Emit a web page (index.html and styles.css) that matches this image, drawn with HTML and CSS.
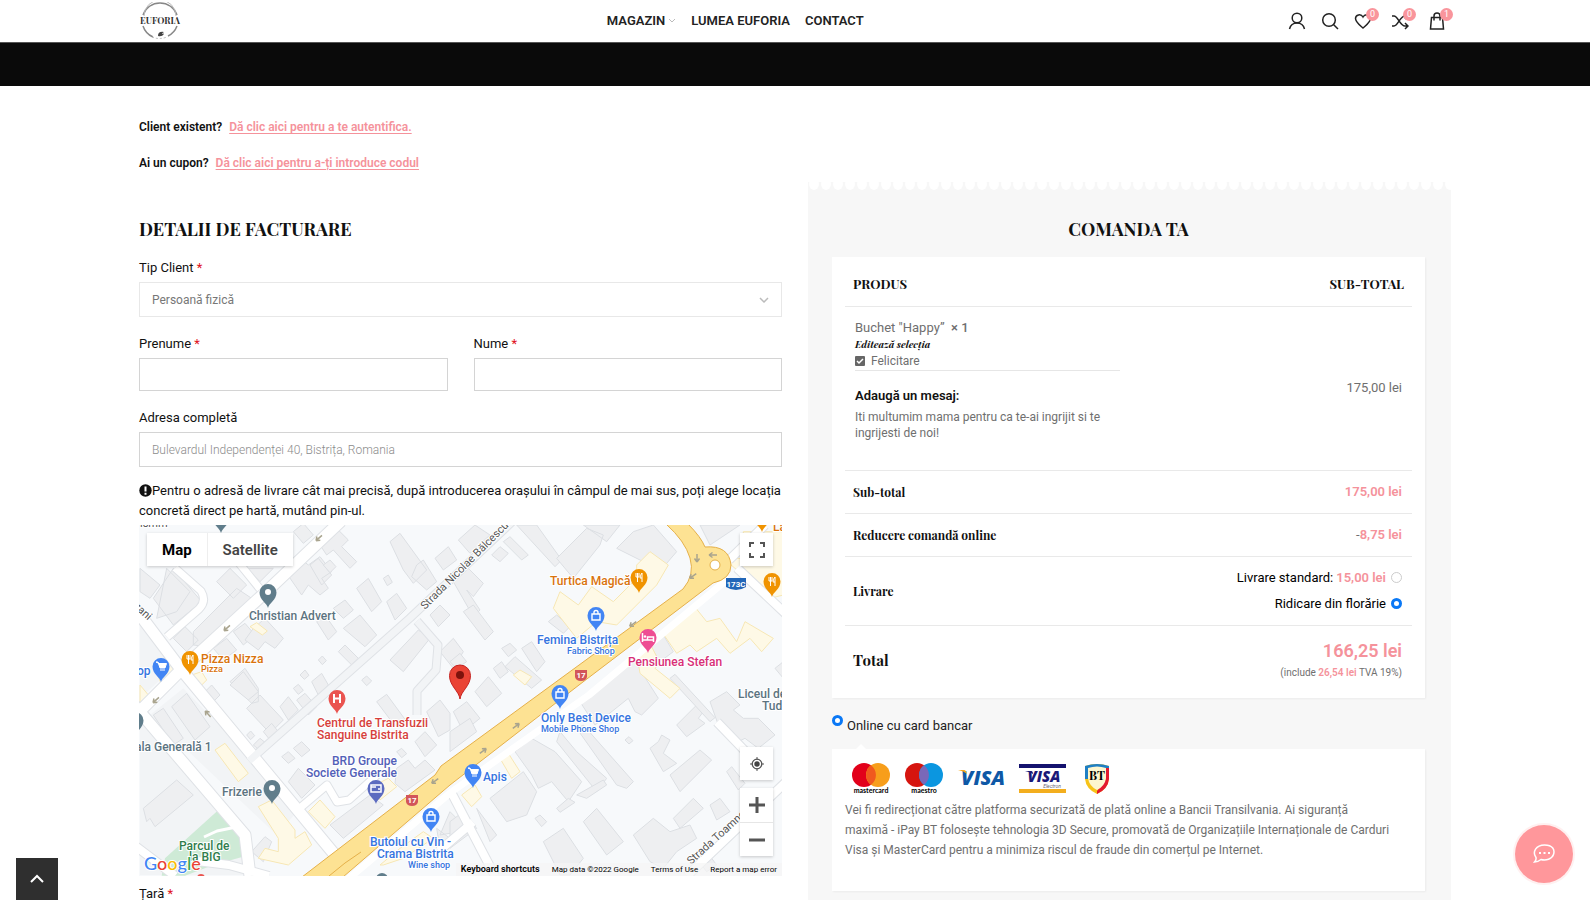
FILE: index.html
```html
<!DOCTYPE html>
<html lang="ro">
<head>
<meta charset="utf-8">
<title>Euforia</title>
<link rel="stylesheet" href="styles.css">
</head>
<body>
<header class="header">
  <div class="container header-row">
    <a class="logo" href="#" aria-label="Euforia">
      <svg width="42" height="38" viewBox="0 0 42 38">
        <g fill="none" stroke="#888">
          <path d="M4 13A18 18 0 0 1 38 13" stroke-width="1.500"/>
          <path d="M5 14A16 16 0 0 1 37 14" stroke="#bbb"/>
          <path d="M4 24A18 18 0 0 0 14 35M38 24A18 18 0 0 1 29 34" stroke-width="1.500"/>
          <path d="M13 35Q20 38 28 35" stroke="#bbb" stroke-dasharray="2 2"/>
        </g>
        <path d="M19 34q0-5 6-4q-2 1-2 2q2-1 2 0q-2 3-6 2z" fill="#444"/>
        <text class="logo-text" x="21" y="22" text-anchor="middle">EUFORIA</text>
      </svg>
    </a>
    <nav class="nav">
      <a href="#">MAGAZIN<svg class="nav-caret" width="8" height="6" viewBox="0 0 8 6"><path d="M1 1l3 3 3-3" fill="none" stroke="#bbb"/></svg></a>
      <a href="#">LUMEA EUFORIA</a>
      <a href="#">CONTACT</a>
    </nav>
    <div class="tools">
      <a class="tool" href="#" aria-label="Cont"><svg width="18" height="18" viewBox="0 0 18 18"><circle cx="9" cy="6" r="4.800"/><path d="M1.500 17c1-4 4-6 7.500-6s6.500 2 7.500 6"/></svg></a>
      <a class="tool" href="#" aria-label="Caută"><svg width="18" height="18" viewBox="0 0 18 18"><circle cx="8" cy="8" r="6.300"/><path d="M12.500 12.500l4.500 4.500"/></svg></a>
      <a class="tool" href="#" aria-label="Favorite"><svg width="18" height="18" viewBox="0 0 18 18"><path d="M9 16C5 12.500 1.500 10 1.500 6.500C1.500 2.500 7 1.500 9 5C11 1.500 16.500 2.500 16.500 6.500C16.500 10 13 12.500 9 16z"/></svg><span class="badge">0</span></a>
      <a class="tool tool-wide" href="#" aria-label="Compară"><svg width="18" height="18" viewBox="0 0 18 18"><path d="M1 4h2c4 0 6 10 11 10h2.500M1 14h2c4 0 6-10 11-10h2.500M14 11l3 3-3 3M14 1l3 3-3 3"/></svg><span class="badge">0</span></a>
      <a class="tool tool-wide" href="#" aria-label="Coș"><svg width="18" height="18" viewBox="0 0 18 18"><path d="M3.500 5.500h11l1 11.500h-13zM6 8.500V4a3 3 0 0 1 6 0v4.500"/></svg><span class="badge">1</span></a>
    </div>
  </div>
</header>
<div class="title-bar"></div>

<main class="container">
  <div class="notices">
    <p>Client existent? <a href="#">Dă clic aici pentru a te autentifica.</a></p>
    <p>Ai un cupon? <a href="#">Dă clic aici pentru a-ți introduce codul</a></p>
  </div>

  <form class="checkout">
    <section class="billing">
      <h2>DETALII DE FACTURARE</h2>
      <div class="field">
        <label for="tip">Tip Client <span class="req">*</span></label>
        <select id="tip" class="control select"><option>Persoană fizică</option></select>
      </div>
      <div class="field-pair">
        <div class="field">
          <label for="prenume">Prenume <span class="req">*</span></label>
          <input id="prenume" class="control control-short" type="text">
        </div>
        <div class="field">
          <label for="nume">Nume <span class="req">*</span></label>
          <input id="nume" class="control control-short" type="text">
        </div>
      </div>
      <div class="field field-address">
        <label for="adresa">Adresa completă</label>
        <input id="adresa" class="control" type="text" placeholder="Bulevardul Independenței 40, Bistrița, Romania">
      </div>
      <p class="hint"><svg class="hint-icon" width="13" height="13" viewBox="0 0 13 13"><circle cx="6.500" cy="6.500" r="6.200" fill="#111"/><path d="M6.500 2.500v5M6.500 8.800v2" stroke="#fff" stroke-width="2"/></svg>Pentru o adresă de livrare cât mai precisă, după introducerea orașului în câmpul de mai sus, poți alege locația concretă direct pe hartă, mutând pin-ul.</p>

      <div class="map">
        <svg class="map-canvas" viewBox="0 0 643 351" preserveAspectRatio="xMidYMid slice">
          <defs>
            <path id="pin" d="M0 0C-1-5-8.500-8-8.500-15.500A8.500 8.500 0 0 1 8.500-15.500C8.500-8 1-5 0 0Z"/>
            <path id="fork" d="M-3-20v4M-1.500-20v4M0-20v4M-3-16h3M-1.500-16v5M3-11v-9q-2 2-2 5h2" fill="none" stroke="#fff"/>
            <path id="bag" d="M-4-17h8v6h-8zM-2-17v-1.500a2 2 0 0 1 4 0V-17" fill="none" stroke="#fff" stroke-width="1.400"/>
            <path id="cart" d="M-5-20h2l2 6h5l1.500-4.500h-7.500zM-1-12h5" fill="#fff" stroke="#fff"/>
            <path id="arrow" d="M-4 0H4M-4 0l3.500-2.500M-4 0l3.500 2.500" fill="none" stroke="#a9a48e" stroke-width="1.500"/>
            <path id="shield" d="M-6-5h12v7q-1 4-6 4t-6-4z" fill="#d2555a"/>
          </defs>
          <rect width="643" height="351" fill="#f7f9fb"/>

          <g transform="translate(-9 -10) scale(.33333)">
            <path fill="#f2f4f6" d="M30 610L350 960V1080H30zM30 330L150 440L30 550zM160 520L510 880L440 960L60 600z"/>
            <path fill="#ceead6" d="M262 888L345 965L350 1022L250 1050L165 1082H95L105 1030z"/>
            <g fill="#eeeff1" stroke="#dcdfe3" stroke-width="3">
              <path d="M70 250L130 160L215 260L130 330zM30 160L90 210L60 250L30 230zM110 160L180 230L140 290L80 310z"/>
              <path d="M190 350L320 220L365 250L235 395L190 390zM130 370l35-35 40 40-35 35zM260 200l40-40 50 50-40 40zM350 160h80l-40 40zM250 400l40-30 30 35-40 30zM310 350l35-25 30 35-35 30z"/>
              <path d="M470 175l40-45 25 20 35-25 35 45-30 20 20 30-25 20-35-30-20 30zM570 90l50-50 35 35-20 20 45 45-20 20-50-55-20 15zM540 150l25-20 40 50-30 30zM490 50l30-25 30 35-30 25z"/>
              <path d="M370 340l35-30 55 60-25 30-30-20-20 25-40-30zM300 500l45-40 40 60 0 40-20 5zM350 580l40-40 70 75-40 40zM580 150l20-15 18 20-18 18zM610 280l35-25 25 30-30 25z"/>
              <path d="M680 220l35-30 40 70-30 30zM640 340l50-40 50 60-35 35zM780 80l30-25 80 110-40 40-30-40zM860 150l20-15 40 65-30 25-45-40zM915 130l40-35 25 40-40 30zM760 190l15-10 12 22-15 10z"/>
              <path d="M780 435L865 345L900 370L820 470zM770 260l30-25 30 45-35 35zM560 320l25-20 35 50-25 25zM930 410l40-40 30 40-30 50zM900 300l30-30 30 30-35 35z"/>
              <path d="M300 510l40-40 45 60-30 25zM450 575l25-30 30 40-30 30zM545 500l30-25 20 35-30 30zM500 555l25-20 35 40-25 25zM490 520l15-12 15 18-15 12zM565 435l12-12 12 14-12 12zM510 480l15-15 12 16-14 12zM625 410l20-20 40 40-20 20zM695 495l15-12 15 15-15 14z"/>
              <path d="M125 575l45-40 70 100-45 40zM70 600l30-20 60 90-30 20zM225 530l20-20 25 30-20 20zM400 650l25-25 20 25-25 25zM370 690l20-20 25 20-22 20zM350 660l12-12 12 14-12 12zM455 725l20-15 20 20-20 15zM490 700l25-20 25 25-25 20z"/>
              <path d="M475 800l30-40 50 50-40 40zM740 560l30-22 55 75-30 20zM855 680l30-30 35 40-35 35zM800 760l35-25 20 25 30-25 30 30-90 65-30-25zM890 590l40-35 30 40 0 50-35 20zM800 710l15-10 15 16-15 12z"/>
              <path d="M40 880L140 795L190 840L75 935L60 910L50 920zM365 1010l40-45 20 15-25 60zM600 930L720 840L760 870L640 970zM960 890l30 30v30l-60 10zM920 940l40 30-30 30z"/>
            </g>
            <g fill="#fef9e6" stroke="#f7e7b4" stroke-width="3">
              <path d="M255 705l30-20 70 90-30 25zM385 875l40-20 70 90 0 25 30-20 20 40-70 60-90-20 20-30 40 10 0-40zM535 890l35-35 45 50-30 35zM750 1050l60-50 70-50 30 20-90 60-60 20zM360 335l20-12 32 25-15 12zM75 460l60-35 18 30-60 50zM30 510l25 30-25 30zM185 480l30-10 15 25-15 15zM735 810l40-20 25 25-50 40z"/>
            </g>
          </g>

          <g transform="translate(311 -10) scale(.33333)">
            <g fill="#eeeff1" stroke="#dcdfe3" stroke-width="3">
              <path d="M25 75l50-45 45 30-60 55zM160 80l20-15 55 55-20 15zM125 120l25-25 25 20-25 25zM10 200l40-45 50 50-30 40-20-20 40 60-20 20zM200 30h60l75 105-20 20z"/>
              <path d="M320 130L410 40L460 60L450 90L370 190zM400 30h110l-40 50zM500 100l50-50 60-20 70 80-60 70-40-40zM750 30h120l-90 60zM40 290l30-20 60 80-25 25zM295 320l25-20 40 35-20 20zM155 400l25-15 20 20-25 20z"/>
              <path d="M215 400l30-20 40 60-25 30zM165 455l30-30 80 70-30 25zM130 460l25-20 20 30-25 20zM75 530l40-45 40 50-45 40zM10 590l40-30 40 50-50 40zM0 440l30-25 20 25-30 20z"/>
              <path d="M390 560l60-40 60-60 45-20 70 110-50 50-20-10-20-40-100 80zM600 390l40-30 30 50-40 30zM680 630l60-60 20 20-15 20 20 15-55 40zM780 560l50-30 40 40-20 15 30 25 45 0 50 50-50 40-40-30-20 10-60-50z"/>
              <path d="M660 490l15-12 120 130-15 12zM600 700l25-20 10-20 25 15-20 40 40 30-40 25zM660 780L750 705L785 735L690 830zM195 710l50-40 70 40 80 90-40 60-50-60-40 20-20-40zM330 650l50 60 90 80-30 40-120-150zM380 640l20-10 150 170-20 20-30-10z"/>
              <path d="M120 850l100-80 40 60-30 70-60 20zM320 880l35-30 20 12-45 30zM380 840l80-45 10 15-60 40zM400 920l40-40 80 100-50 40zM280 980l60-40 60 90-40 50H330zM550 960l60-50 50 40 60-20 20 40-60 40-40 50-40-20zM670 910l60-60 30 30-70 60zM780 870l30-20 30 40-40 25zM830 770l15-15 40 50-20 20zM975 460l25-20v50zM255 910l15-10 20 20-15 15zM525 675l12-10 12 12-12 10z"/>
              <path d="M0 920l40-30 40 50-80 60zM80 880l60 80-20 20zM740 1030l30-20 30 40-30 20zM0 650l60-40 20 40-80 60z"/>
            </g>
            <g fill="#fef9e6" stroke="#f7e7b4" stroke-width="3">
              <path d="M310 280L330 230L385 270L425 215L490 260L560 190L560 150L600 110L655 150L620 210L570 260L500 330L440 320L380 370zM635 350L730 270L770 320L810 310L860 380L885 320L970 370L935 410L900 370L840 415L800 370L740 410L720 390L680 415zM820 130L880 130V50H1000V240L960 250zM560 410l40-25 30 60-15 15 75 60-30 30-90-75zM150 730l25-15 35 55-25 20zM35 840l40-30 20 35-30 30zM190 480l20-15 35 20-20 25z"/>
            </g>
          </g>

          <g fill="none" stroke-linejoin="round">
            <g stroke="#dfe2e6">
              <path d="M-5 192L45 142L128 66L202-4M-5 82L41 143L196 330M-5 180L106 310L111 351" stroke-width="13"/>
              <path d="M110 236L271 93L376-6M278 96L299 120L297 145L278 166V190M161 283L188 260L198 277L210 275L238 250M36 43L62 66Q68 76 60 84L28 112M100 38L121 64" stroke-width="9"/>
              <path d="M311 265L356 351M300 326L334 297M590 35L626 0M598 43L648 90M578 197L606 226M548 351L648 256M-5 320L36 351M58 336L90 340L130 351" stroke-width="10"/>
            </g>
            <g stroke="#fff">
              <path d="M-5 192L45 142L128 66L202-4M-5 82L41 143L196 330M-5 180L106 310L111 351" stroke-width="11"/>
              <path d="M36 43L62 66Q68 76 60 84L28 112M100 38L121 64M161 283L188 260L198 277L210 275L238 250" stroke-width="7"/>
              <path d="M311 265L356 351M300 326L334 297M590 35L626 0M598 43L648 90M578 197L606 226M548 351L648 256M-5 320L36 351M58 336L90 340L130 351" stroke-width="8"/>
              <path d="M65 312L78 306L102 301" stroke-width="3"/>
              <path d="M208 355L311 268L450 170L590 53" stroke-width="7"/>
            </g>
            <path d="M110 236L271 93L376-6M278 96L299 120L297 145L278 166V190" stroke="#f2f4f6" stroke-width="7"/>
          </g>

          <path d="M163 352L296 250L302 241L544 64Q556 50 551 33Q546 16 527-1H549Q562 12 566 22Q590 20 592 40Q592 54 574 58L440 160L311 260L204 352Z" fill="#fde293" stroke="#e5b04a" stroke-width="1"/>
          <path d="M190 351L206 338L222 327" fill="none" stroke="#e5b04a"/>
          <circle cx="576" cy="40" r="5" fill="#fff" stroke="#e5b04a"/>

          <use href="#arrow" transform="translate(180 13) rotate(-42)"/>
          <use href="#arrow" transform="translate(88 103) rotate(-42)"/>
          <use href="#arrow" transform="translate(17 175) rotate(-42)"/>
          <use href="#arrow" transform="translate(69 189) rotate(48)"/>
          <use href="#arrow" transform="translate(296 256) rotate(-35)"/>
          <use href="#arrow" transform="translate(344 226) rotate(143)"/>
          <use href="#arrow" transform="translate(377 201) rotate(143)"/>
          <use href="#arrow" transform="translate(494 99) rotate(-35)"/>
          <use href="#arrow" transform="translate(554 51) rotate(-35)"/>
          <use href="#arrow" transform="translate(558 33) rotate(-90)"/>
          <use href="#arrow" transform="translate(574 30)"/>

          <use href="#shield" x="273" y="275"/>
          <use href="#shield" x="442" y="150"/>
          <path d="M587 53h20v9q-5 3-10 3t-10-3z" fill="#2266b8"/>
          <g class="road-no">
            <text x="273" y="278">17</text><text x="442" y="153">17</text><text x="597" y="62">173C</text>
          </g>

          <g fill="#607d8b"><use href="#pin" x="129" y="83"/><use href="#pin" x="133" y="279"/><use href="#pin" x="-4" y="211"/><use href="#pin" x="82" y="8"/></g>
          <g fill="#f09300"><use href="#pin" x="51" y="150"/><use href="#pin" x="500" y="68"/><use href="#pin" x="633" y="72"/><use href="#pin" x="623" y="7"/></g>
          <g fill="#4285f4"><use href="#pin" x="22" y="157"/><use href="#pin" x="292" y="307"/><use href="#pin" x="457" y="106"/><use href="#pin" x="421" y="184"/><use href="#pin" x="334" y="263"/></g>
          <use href="#pin" x="198" y="189" fill="#ea5450"/>
          <use href="#pin" x="237" y="279" fill="#5c6bc0"/>
          <use href="#pin" x="509" y="128" fill="#ee4d93"/>
          <g fill="#fff"><circle cx="129" cy="67" r="3"/><circle cx="133" cy="263" r="3"/></g>
          <path d="M195 169v9M201 169v9M195 173.500h6" fill="none" stroke="#fff" stroke-width="2"/>
          <path d="M232 260h10v7h-10zM232 262h5M239 264h2" fill="none" stroke="#fff" stroke-width="1.500"/>
          <path d="M503.500 108v9M503.500 115h11M514.500 117v-5h-6v3" fill="none" stroke="#fff" stroke-width="1.500"/>
          <circle cx="506" cy="111.500" r="1.200" fill="#fff"/>
          <use href="#fork" x="51" y="150"/><use href="#fork" x="500" y="68"/><use href="#fork" x="633" y="72"/>
          <use href="#bag" x="292" y="307"/><use href="#bag" x="457" y="106"/><use href="#bag" x="421" y="184"/>
          <use href="#cart" x="22" y="157"/><use href="#cart" x="334" y="263"/>
          <path d="M321 174C320 166 310.500 161 310.500 150.500A10.500 10.500 0 0 1 331.500 150.500C331.500 161 322 166 321 174Z" fill="#ea4335" stroke="#c5221f"/>
          <circle cx="321" cy="150" r="4" fill="#7d120c"/>
          <circle cx="62" cy="353" r="4" fill="#ea5450"/><circle cx="243" cy="354" r="6" fill="#607d8b"/>

          <g class="poi poi-slate">
            <text x="110" y="95">Christian Advert</text>
            <text x="83" y="271">Frizerie</text>
            <text x="-4" y="226">ala Generală 1</text>
            <text x="599" y="173">Liceul de</text>
            <text x="623" y="185">Tud</text>
          </g>
          <g class="poi poi-orange">
            <text x="62" y="138">Pizza Nizza</text>
            <text class="poi-sub" x="62" y="147">Pizza</text>
            <text x="411" y="60">Turtica Magică</text>
            <text x="634" y="6">La</text>
          </g>
          <g class="poi poi-red">
            <text x="178" y="202">Centrul de Transfuzii</text>
            <text x="178" y="214">Sanguine Bistrita</text>
          </g>
          <g class="poi poi-violet">
            <text x="193" y="240">BRD Groupe</text>
            <text x="167" y="252">Societe Generale</text>
          </g>
          <g class="poi poi-blue">
            <text x="-2" y="150">op</text>
            <text x="231" y="321">Butoiul cu Vin -</text>
            <text x="238" y="333">Crama Bistrita</text>
            <text class="poi-sub" x="269" y="343">Wine shop</text>
            <text x="398" y="119">Femina Bistrița</text>
            <text class="poi-sub" x="428" y="129">Fabric Shop</text>
            <text x="402" y="197">Only Best Device</text>
            <text class="poi-sub" x="402" y="207">Mobile Phone Shop</text>
            <text x="344" y="256">Apis</text>
          </g>
          <g class="poi poi-pink"><text x="489" y="141">Pensiunea Stefan</text></g>
          <g class="poi poi-green"><text x="40" y="325">Parcul de</text><text x="50" y="336">la BIG</text></g>
          <g class="street">
            <text transform="translate(286 85) rotate(-45)">Strada Nicolae Bălcescu</text>
            <text transform="translate(552 340) rotate(-42)">Strada Toamnei</text>
            <text transform="translate(-6 82) rotate(42)">zani</text>
            <text x="1" y="2">ismm</text>
          </g>
          <text class="google" x="5" y="345"><tspan fill="#4285f4">G</tspan><tspan fill="#ea4335">o</tspan><tspan fill="#fbbc05">o</tspan><tspan fill="#4285f4">g</tspan><tspan fill="#34a853">l</tspan><tspan fill="#ea4335">e</tspan></text>
        </svg>
        <div class="map-types"><button type="button" class="map-type map-type-on">Map</button><button type="button" class="map-type">Satellite</button></div>
        <button type="button" class="map-btn map-full" aria-label="Ecran complet"><svg width="16" height="16" viewBox="0 0 16 16"><path d="M1 5V1h4M11 1h4v4M15 11v4h-4M5 15H1v-4" fill="none" stroke="#555" stroke-width="2"/></svg></button>
        <div class="map-side">
          <button type="button" class="map-btn" aria-label="Locația mea"><svg width="14" height="14" viewBox="0 0 14 14"><circle cx="7" cy="7" r="4.800" fill="none" stroke="#555" stroke-width="1.300"/><circle cx="7" cy="7" r="2.700" fill="#444"/><path d="M7 0v3M7 11v3M0 7h3M11 7h3" stroke="#555"/></svg></button>
          <div class="map-zoom">
            <button type="button" class="map-btn" aria-label="Mărește"><svg width="16" height="16" viewBox="0 0 16 16"><path d="M8 0v16M0 8h16" stroke="#555" stroke-width="3"/></svg></button>
            <button type="button" class="map-btn" aria-label="Micșorează"><svg width="16" height="16" viewBox="0 0 16 16"><path d="M0 8h16" stroke="#555" stroke-width="3"/></svg></button>
          </div>
        </div>
        <div class="map-legal"><button type="button">Keyboard shortcuts</button><span>Map data ©2022 Google</span><a href="#">Terms of Use</a><a href="#">Report a map error</a></div>
      </div>
      <div class="field field-country"><span class="label">Țară <span class="req">*</span></span></div>
    </section>

    <section class="order">
      <svg class="scallop" width="100%" height="8"><defs><pattern id="waves" width="12" height="8" patternUnits="userSpaceOnUse"><rect width="12" height="8" fill="#f7f7f7"/><ellipse cx="6" cy="2" rx="5" ry="6" fill="#fff"/></pattern></defs><rect width="100%" height="8" fill="url(#waves)"/></svg>
      <h2>COMANDA TA</h2>
      <div class="card">
        <table class="summary">
          <thead><tr><th>PRODUS</th><th class="amount">SUB-TOTAL</th></tr></thead>
          <tbody>
            <tr class="product">
              <td>
                <div class="product-body">
                  <div class="product-name">Buchet "Happy”&nbsp; <strong>× 1</strong></div>
                  <a class="edit" href="#">Editează selecția</a>
                  <div class="option"><svg width="10" height="10" viewBox="0 0 10 10"><rect width="10" height="10" rx="1" fill="#666"/><path d="M2 5l2 2 4-4" fill="none" stroke="#fff" stroke-width="1.500"/></svg>Felicitare</div>
                  <div class="message-title">Adaugă un mesaj:</div>
                  <p class="message">Iti multumim mama pentru ca te-ai ingrijit si te ingrijesti de noi!</p>
                </div>
              </td>
              <td class="amount">175,00 lei</td>
            </tr>
            <tr><th>Sub-total</th><td class="amount"><b>175,00 lei</b></td></tr>
            <tr><th>Reducere comandă online</th><td class="amount">-<b>8,75 lei</b></td></tr>
            <tr class="shipping"><th>Livrare</th><td class="amount">
              <label>Livrare standard: <b>15,00 lei</b><input class="radio" type="radio" name="livrare"></label>
              <label>Ridicare din florărie<input class="radio" type="radio" name="livrare" checked></label>
            </td></tr>
            <tr class="total"><th>Total</th><td class="amount"><b class="grand">166,25 lei</b><small>(include <b>26,54 lei</b> TVA 19%)</small></td></tr>
          </tbody>
        </table>
      </div>
      <div class="pay">
        <input class="radio" id="card" type="radio" name="plata" checked><label for="card">Online cu card bancar</label>
      </div>
      <div class="card pay-box">
        <div class="brands">
          <svg width="38" height="32" viewBox="0 0 38 32" role="img" aria-label="mastercard"><circle cx="12" cy="12" r="12" fill="#e2001a"/><circle cx="26" cy="12" r="12" fill="#f79e1b"/><path d="M19 2.300a12 12 0 0 1 0 19.400a12 12 0 0 1 0-19.400z" fill="#f0591e"/><text class="brand-name" x="19" y="30">mastercard</text></svg>
          <svg width="38" height="32" viewBox="0 0 38 32" role="img" aria-label="maestro"><circle cx="12" cy="12" r="12" fill="#d6150f"/><circle cx="26" cy="12" r="12" fill="#0b96e0"/><path d="M19 2.300a12 12 0 0 1 0 19.400a12 12 0 0 1 0-19.400z" fill="#7a68b8"/><text class="brand-name" x="19" y="30">maestro</text></svg>
          <svg width="48" height="32" viewBox="0 0 48 32" role="img" aria-label="VISA"><text class="visa" x="25" y="22" fill="#0e58a6">VISA</text><path d="M0 7h6q2 0 3 4q-3-3-9-4z" fill="#f5a81c"/></svg>
          <svg class="electron-card" width="47" height="32" viewBox="0 0 47 32" role="img" aria-label="VISA Electron"><path d="M0 1h47v4H0z" fill="#14126e"/><path d="M0 26h47v4H0z" fill="#f3ae1e"/><text class="visa visa-small" x="25" y="19" fill="#1a1878">VISA</text><path d="M6 8h6q2 0 2 3q-3-2-8-3z" fill="#1a1878"/><text class="electron" x="33" y="25">Electron</text></svg>
          <svg class="bt" width="26" height="32" viewBox="0 0 26 32" role="img" aria-label="BT"><path d="M13 1Q19 1 25 3V16Q24 26 13 31Q2 26 1 16V3Q7 1 13 1z" fill="#f7c318"/><path d="M1 16V3Q7 1 13 1Q19 1 25 3V5H4V16z" fill="#1f7fc4"/><path d="M25 5V16Q24 26 13 31V28L22 16V5z" fill="#e3192e"/><path d="M4 5Q13 2 22 5V15Q21 23 13 27Q5 23 4 15z" fill="#fdf6cf"/><text class="bt-text" x="13" y="17">BT</text></svg>
        </div>
        <p class="pay-text">Vei fi redirecționat către platforma securizată de plată online a Bancii Transilvania. Ai siguranță<br>maximă - iPay BT folosește tehnologia 3D Secure, promovată de Organizațiile Internaționale de Carduri<br>Visa și MasterCard pentru a minimiza riscul de fraude din comerțul pe Internet.</p>
      </div>
    </section>
  </form>
</main>

<button type="button" class="to-top" aria-label="Sus"><svg width="14" height="9" viewBox="0 0 14 9"><path d="M1 8l6-6 6 6" fill="none" stroke="#fff" stroke-width="2"/></svg></button>
<button type="button" class="chat" aria-label="Chat"><svg width="22" height="20" viewBox="0 0 22 20"><path d="M3 13.500C-1 8 3 1 11.500 1S22 6 20.500 10.500S13 17 8 15.500Q5 18 1.500 18Q3.500 16 3 13.500z" fill="none" stroke="#fff" stroke-width="1.500"/><path d="M6 9h2M10.500 9h2M15 9h2" stroke="#fff" stroke-width="1.800"/></svg></button>
</body>
</html>
```

FILE: styles.css
```css
:root {
  --pink: #f5929b;
  --ink: #111;
  --grey: #6f6f6f;
  --serif: "Playfair Display", "Liberation Serif", serif;
  --sans: Roboto, "Liberation Sans", sans-serif;
}
* { box-sizing: border-box; }
html { scrollbar-width: none; }
body { margin: 0; background: #fff; color: var(--ink); font: 13px/20px var(--sans); }
h2, p { margin: 0; }
button, input, select { font: inherit; }
a { color: inherit; text-decoration: none; }
.container { max-width: 1360px; margin: 0 auto; padding: 0 24px; }

.header-row { display: grid; grid-template-columns: 47fr auto 59fr; align-items: center; height: 42px; }
.logo { display: flex; }
.logo-text { font: bold 9px var(--serif); fill: #333; }
.nav { display: flex; gap: 15px; font-weight: 600; color: #222; }
.nav-caret { margin-left: 3px; vertical-align: 1px; }
.tools { display: flex; justify-content: flex-end; gap: 15px; padding-right: 5px; }
.tool { position: relative; display: flex; }
.tool-wide { margin-left: 4px; }
.tool svg { fill: none; stroke: #222; stroke-width: 1.5; }
.badge { position: absolute; left: 12px; top: -4px; width: 13px; height: 13px; border-radius: 50%; background: #f9959c; color: #fff; font-size: 9px; line-height: 13px; text-align: center; }
.title-bar { height: 44px; background: #0a0a0a; border-top: 1px solid #555; }

.notices { display: grid; gap: 16px; padding: 31px 0 9px; font-size: 12px; font-weight: 600; }
.notices a { margin-left: 4px; color: var(--pink); text-decoration: underline; text-underline-offset: 2px; }

.checkout { display: grid; grid-template-columns: 1fr 1fr; gap: 26px; }
h2 { font: bold 18px/24px var(--serif); }
.billing { padding-top: 35px; }
.billing h2 { margin-bottom: 17px; }
.field { display: grid; gap: 4px; margin-bottom: 17px; }
.field-pair { display: grid; grid-template-columns: 1fr 1fr; gap: 26px; }
.req { color: #e01020; }
.control { width: 100%; height: 35px; padding: 0 12px; border: 1px solid #d4d4d4; border-radius: 0; background-color: #fff; color: #777; font-size: 12px; }
.control::placeholder { color: #8c8c8c; opacity: 1; font-weight: 300; }
.control-short { height: 33px; }
.select { appearance: none; border-color: #e8e8e8; background: #fff url("data:image/svg+xml,%3Csvg xmlns='http://www.w3.org/2000/svg' width='10' height='6'%3E%3Cpath d='M1 1l4 4 4-4' fill='none' stroke='%23bbb' stroke-width='1.5'/%3E%3C/svg%3E") no-repeat right 12px center; }
.field-address { margin-bottom: 14px; }
.hint { margin-bottom: 4px; }
.hint-icon { vertical-align: -2px; }
.field-country { margin-top: 8px; margin-bottom: 24px; }

.map { position: relative; height: 351px; overflow: hidden; }
.map-canvas { display: block; width: 100%; height: 100%; }
.map-types { position: absolute; left: 8px; top: 8px; display: flex; background: #fff; box-shadow: 0 1px 3px #0003; }
.map-type { height: 33px; padding: 0 15px; border: 0; background: none; font-size: 15px; font-weight: 600; color: #444; }
.map-type-on { font-weight: 700; color: #000; border-right: 1px solid #eee; }
.map-btn { display: grid; place-items: center; width: 33px; height: 33px; padding: 0; border: 0; background: #fff; box-shadow: 0 1px 3px #0003; }
.map-full { position: absolute; right: 9px; top: 8px; }
.map-side { position: absolute; right: 9px; bottom: 20px; display: grid; gap: 8px; }
.map-zoom { box-shadow: 0 1px 3px #0003; background: #fff; }
.map-zoom .map-btn { height: 34px; box-shadow: none; }
.map-zoom .map-btn + .map-btn { border-top: 1px solid #e6e6e6; }
.map-legal { position: absolute; right: 0; bottom: 0; display: flex; gap: 12px; padding: 0 5px; background: #f5f5f5b3; font-size: 8px; line-height: 13px; color: #000; }
.map-legal button { padding: 0; border: 0; background: none; font-size: 9px; font-weight: 600; }
.poi text { font: 500 12px var(--sans); stroke: #fff; stroke-width: 2px; paint-order: stroke; }
.poi text.poi-sub { font-size: 9px; }
.poi-slate { fill: #5b7380; }
.poi-orange { fill: #d9730d; }
.poi-red { fill: #d63f3c; }
.poi-violet { fill: #5260b8; }
.poi-blue { fill: #3574e0; }
.poi-pink { fill: #d82f78; }
.poi-green { fill: #2f7d4c; }
.street text { font: 11px var(--sans); fill: #555; stroke: #fff; stroke-width: 2px; paint-order: stroke; }
.road-no text { font: bold 8px var(--sans); fill: #fff; text-anchor: middle; }
.google { font: 500 18px Lato, sans-serif; stroke: #fff; stroke-width: 2px; paint-order: stroke; }

.order { padding: 0 26px 24px 24px; background: #f7f7f7; }
.scallop { display: block; width: calc(100% + 50px); margin-left: -24px; }
.order h2 { margin: 27px 0 16px; text-align: center; }
.card { background: #fff; box-shadow: 1px 1px 2px #0000000d; padding: 0 13px; }
.summary { width: 100%; border-collapse: collapse; color: var(--grey); }
.summary tr + tr, .summary tbody tr:first-child { border-top: 1px solid #e9e9e9; }
.summary th, .summary td { height: 43px; padding: 0 8px; text-align: left; }
.summary th { font: bold 12px/20px var(--serif); color: var(--ink); }
.summary thead th { height: 49px; padding-top: 5px; font-size: 13px; }
.summary .amount { text-align: right; padding-right: 10px; }
.summary thead .amount { padding-right: 8px; }
.summary b { font-weight: 600; color: var(--pink); }
.summary .product td { height: 164px; padding-left: 10px; }
.product-body { width: 265px; padding-bottom: 16px; }
.product-name { line-height: 16px; }
.product-name strong { font-weight: 500; }
.edit { display: block; font: italic bold 10px/16px var(--serif); color: var(--ink); }
.option { display: flex; align-items: center; gap: 6px; height: 19px; border-bottom: 1px solid #e6e6e6; font-size: 12px; }
.message-title { margin-top: 15px; font-weight: 600; color: var(--ink); }
.message { margin-top: 3px; font-size: 12px; line-height: 16px; }
.summary .shipping td { height: 69px; }
.shipping label { display: flex; justify-content: flex-end; align-items: center; gap: 5px; color: #000; line-height: 26px; }
.shipping label b { margin-left: -2px; }
.radio { appearance: none; width: 11px; height: 11px; margin: 0; border: 1px solid #ccc; border-radius: 50%; background: #fff; }
.radio:checked { border: 3px solid #0a78f5; }
.summary .total th { padding-bottom: 4px; font-size: 15px; }
.summary .total td { height: 73px; padding-bottom: 2px; }
.grand { display: block; font-size: 18px; line-height: 24px; }
small { display: block; font-size: 10px; }
.pay { display: flex; gap: 4px; padding: 16px 0 13px; color: #222; }
.pay .radio { margin-top: 1px; }
.pay label { padding-top: 2px; }
.pay-box { position: relative; padding-top: 14px; padding-bottom: 31px; color: var(--grey); }
.pay-box::before { content: ""; position: absolute; left: 24px; top: -5px; border: 5px solid transparent; border-top: 0; border-bottom-color: #fff; }
.brands { display: flex; align-items: center; gap: 15px; height: 32px; margin-bottom: 5px; padding-left: 7px; }
.electron-card { margin-left: -2px; }
.bt { margin-left: 3px; }
.brand-name { font: bold 7px Lato, sans-serif; text-anchor: middle; }
.visa { font: italic 800 20px "Open Sans", sans-serif; text-anchor: middle; }
.visa.visa-small { font-size: 15px; }
.electron { font: italic 5px var(--sans); text-anchor: middle; fill: #667; }
.bt-text { font: bold 12px var(--serif); text-anchor: middle; }
.pay-text { font-size: 12px; }

.to-top { position: fixed; left: 16px; bottom: 0; width: 42px; height: 42px; padding: 0; border: 0; background: #2f2f2f; }
.chat { position: fixed; right: 17px; bottom: 17px; display: grid; place-items: center; width: 58px; height: 58px; padding: 0; border: 0; border-radius: 50%; background: #ff979b; box-shadow: 0 0 0 2px #ff979b26; }
```
